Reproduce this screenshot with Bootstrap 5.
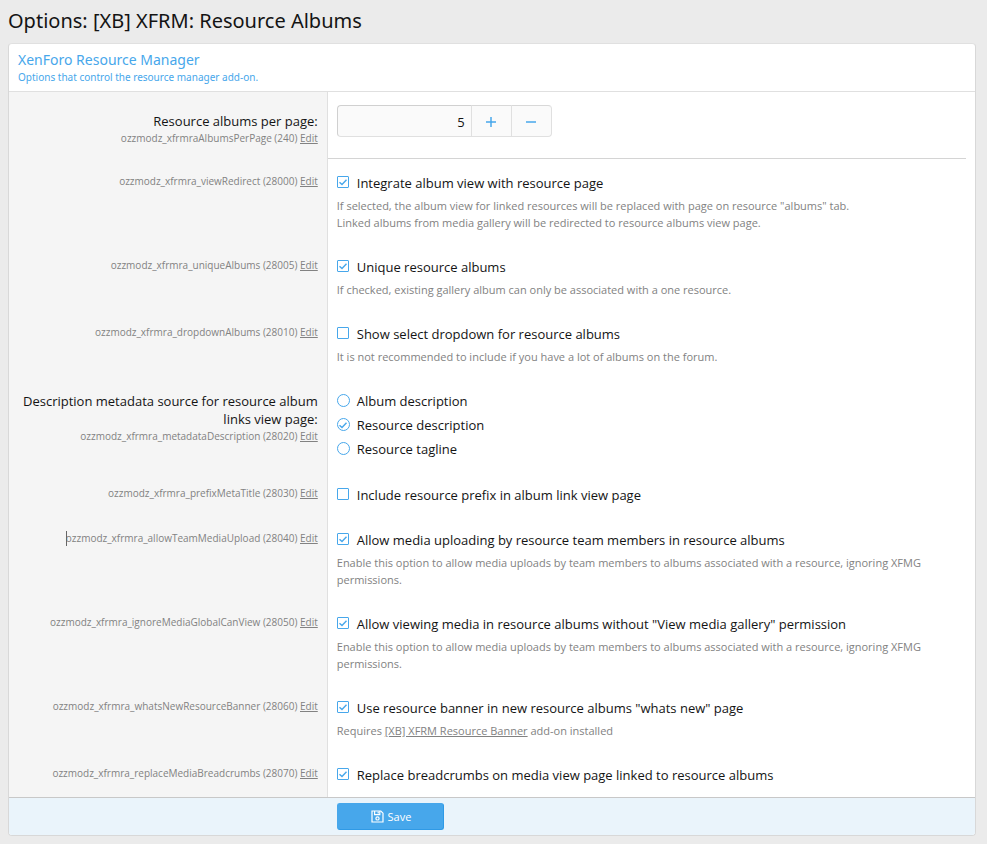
<!DOCTYPE html>
<html lang="en">
<head>
<meta charset="utf-8">
<meta name="viewport" content="width=device-width, initial-scale=1">
<title>Options: [XB] XFRM: Resource Albums</title>
<link href="https://cdn.jsdelivr.net/npm/bootstrap@5.3.0/dist/css/bootstrap.min.css" rel="stylesheet">
<style>
  body { background: #ebebeb; color: #141414; font-family: "Open Sans", sans-serif; font-size: 13px; line-height: 18px; }
  .page { padding: 8px 11px 8px 8px; }
  .page-title { font-family: "Noto Sans", sans-serif; font-size: 20px; line-height: 26px; margin-bottom: 9px; }
  .block { background: #fff; border: 1px solid #d8d8d8; border-top-color: #e0e0e0; border-radius: 4px; overflow: hidden; }
  .block-head { font-family: "Noto Sans", sans-serif; color: #47a7eb; padding: 6px 9px 6px; border-bottom: 1px solid #e0e0e0; }
  .block-head h2 { font-size: 14px; line-height: 20px; margin: 0; }
  .block-head p { font-size: 10px; line-height: 15px; margin: 0; }
  .term { width: 33%; background: #f5f5f5; border-right: 1px solid #e0e0e0; padding: 14px 9px 0; }
  .term label, .term .term-label { display: block; padding-top: 1px; }
  .term small { display: block; font-size: 10px; line-height: 16px; color: #828282; }
  .term small a, .hint a { color: #828282; }
  .value { padding: 15px 9px 12px; min-width: 0; }
  .first .term { padding-top: 19px; }
  .first .value { padding: 13px 9px 21px 9px; }
  .first-line { border-bottom: 1px solid #d4d4d4; margin-right: 9px; }
  .last-row .value { padding-bottom: 13px; }
  .hint { font-size: 11px; line-height: 17px; color: #828282; margin: 5px 0 0; }
  .choice { display: flex; gap: 8px; min-height: 18px; margin: 0; padding: 0; }
  .choice .form-check-input { width: 12px; height: 12px; margin: 2px 0 0; float: none; flex: none; border: 1px solid #47a7eb; border-radius: 1px; background-color: #fff; box-shadow: none; }
  .choice .form-check-input[type=radio] { width: 13px; height: 13px; margin-right: -1px; border-radius: 50%; }
  .choice .form-check-input:checked { background-color: #fff; background-size: 10px 10px; background-position: center; background-image: url("data:image/svg+xml,%3Csvg xmlns='http://www.w3.org/2000/svg' viewBox='0 0 10 10'%3E%3Cpath d='M1.5 5.2L4 7.5L8.5 2.8' fill='none' stroke='%2347a7eb' stroke-width='1.4'/%3E%3C/svg%3E"); }
  .radios { gap: 6px; padding-bottom: 1px; }
  .stepper { width: 215px; height: 32px; }
  .stepper .form-control { font: inherit; text-align: right; color: #141414; background: #fafafa; border-color: #d0d0d0 #e0e0e0 #e0e0e0 #d0d0d0; padding: 2px 6px 0; border-radius: 4px; appearance: textfield; -moz-appearance: textfield; }
  .stepper .form-control::-webkit-inner-spin-button { appearance: none; margin: 0; }
  .stepper .btn { width: 41px; padding: 0 0 2px; background: #fafafa; border-color: #d8d8d8 #e0e0e0 #e0e0e0; border-radius: 4px; line-height: 1; }
  .stepper svg { stroke: #47a7eb; stroke-width: 1.5; }
  .caret::before { content: ""; position: absolute; left: 0; top: 0; width: 1px; height: 15px; background: #666; }
  .block-foot { background: #eaf4fb; border-top: 1px solid #c8c8c8; padding: 5px 0 5px 34%; }
  .btn-save { width: 107px; height: 27px; padding: 0; background: #47a7eb; border: 1px solid #47a7eb; border-right-color: #2f9ae6; border-bottom-color: #2f9ae6; border-radius: 3px; color: #fff; font: 11px/18px "Open Sans", sans-serif; }
</style>
</head>
<body>
<main class="page">
  <h1 class="page-title fw-normal">Options: [XB] XFRM: Resource Albums</h1>
  <form class="block">
    <header class="block-head">
      <h2 class="fw-normal">XenForo Resource Manager</h2>
      <p>Options that control the resource manager add-on.</p>
    </header>

    <div class="d-flex first">
      <div class="term text-end flex-shrink-0">
        <label for="perPage">Resource albums per page:</label>
        <small>ozzmodz_xfrmraAlbumsPerPage (240) <a href="#">Edit</a></small>
      </div>
      <div class="flex-fill first-line"><div class="value">
        <div class="input-group stepper flex-nowrap">
          <input class="form-control" type="number" id="perPage" value="5">
          <button class="btn" type="button" aria-label="Increase"><svg width="12" height="12" viewBox="0 0 12 12"><path d="M1 6H11M6 1V11"/></svg></button>
          <button class="btn" type="button" aria-label="Decrease"><svg width="12" height="12" viewBox="0 0 12 12"><path d="M1 6H11"/></svg></button>
        </div>
      </div></div>
    </div>

    <div class="d-flex">
      <div class="term text-end flex-shrink-0"><small>ozzmodz_xfrmra_viewRedirect (28000) <a href="#">Edit</a></small></div>
      <div class="value flex-fill">
        <div class="choice"><input class="form-check-input" type="checkbox" id="redirect" checked><label for="redirect">Integrate album view with resource page</label></div>
        <p class="hint">If selected, the album view for linked resources will be replaced with page on resource "albums" tab.<br>Linked albums from media gallery will be redirected to resource albums view page.</p>
      </div>
    </div>

    <div class="d-flex">
      <div class="term text-end flex-shrink-0"><small>ozzmodz_xfrmra_uniqueAlbums (28005) <a href="#">Edit</a></small></div>
      <div class="value flex-fill">
        <div class="choice"><input class="form-check-input" type="checkbox" id="unique" checked><label for="unique">Unique resource albums</label></div>
        <p class="hint">If checked, existing gallery album can only be associated with a one resource.</p>
      </div>
    </div>

    <div class="d-flex">
      <div class="term text-end flex-shrink-0"><small>ozzmodz_xfrmra_dropdownAlbums (28010) <a href="#">Edit</a></small></div>
      <div class="value flex-fill">
        <div class="choice"><input class="form-check-input" type="checkbox" id="dropdown"><label for="dropdown">Show select dropdown for resource albums</label></div>
        <p class="hint">It is not recommended to include if you have a lot of albums on the forum.</p>
      </div>
    </div>

    <div class="d-flex" role="radiogroup" aria-labelledby="metaLabel">
      <div class="term text-end flex-shrink-0">
        <span class="term-label" id="metaLabel">Description metadata source for resource album links view page:</span>
        <small>ozzmodz_xfrmra_metadataDescription (28020) <a href="#">Edit</a></small>
      </div>
      <div class="value flex-fill"><div class="d-flex flex-column radios">
        <div class="choice"><input class="form-check-input" type="radio" name="meta" id="meta1"><label for="meta1">Album description</label></div>
        <div class="choice"><input class="form-check-input" type="radio" name="meta" id="meta2" checked><label for="meta2">Resource description</label></div>
        <div class="choice"><input class="form-check-input" type="radio" name="meta" id="meta3"><label for="meta3">Resource tagline</label></div>
      </div></div>
    </div>

    <div class="d-flex">
      <div class="term text-end flex-shrink-0"><small>ozzmodz_xfrmra_prefixMetaTitle (28030) <a href="#">Edit</a></small></div>
      <div class="value flex-fill">
        <div class="choice"><input class="form-check-input" type="checkbox" id="prefix"><label for="prefix">Include resource prefix in album link view page</label></div>
      </div>
    </div>

    <div class="d-flex">
      <div class="term text-end flex-shrink-0"><small><span class="caret position-relative">ozzmodz_xfrmra_allowTeamMediaUpload</span> (28040) <a href="#">Edit</a></small></div>
      <div class="value flex-fill">
        <div class="choice"><input class="form-check-input" type="checkbox" id="team" checked><label for="team">Allow media uploading by resource team members in resource albums</label></div>
        <p class="hint">Enable this option to allow media uploads by team members to albums associated with a resource, ignoring XFMG permissions.</p>
      </div>
    </div>

    <div class="d-flex">
      <div class="term text-end flex-shrink-0"><small>ozzmodz_xfrmra_ignoreMediaGlobalCanView (28050) <a href="#">Edit</a></small></div>
      <div class="value flex-fill">
        <div class="choice"><input class="form-check-input" type="checkbox" id="ignore" checked><label for="ignore">Allow viewing media in resource albums without "View media gallery" permission</label></div>
        <p class="hint">Enable this option to allow media uploads by team members to albums associated with a resource, ignoring XFMG permissions.</p>
      </div>
    </div>

    <div class="d-flex">
      <div class="term text-end flex-shrink-0"><small>ozzmodz_xfrmra_whatsNewResourceBanner (28060) <a href="#">Edit</a></small></div>
      <div class="value flex-fill">
        <div class="choice"><input class="form-check-input" type="checkbox" id="banner" checked><label for="banner">Use resource banner in new resource albums "whats new" page</label></div>
        <p class="hint">Requires <a href="#">[XB] XFRM Resource Banner</a> add-on installed</p>
      </div>
    </div>

    <div class="d-flex last-row">
      <div class="term text-end flex-shrink-0"><small>ozzmodz_xfrmra_replaceMediaBreadcrumbs (28070) <a href="#">Edit</a></small></div>
      <div class="value flex-fill">
        <div class="choice"><input class="form-check-input" type="checkbox" id="crumbs" checked><label for="crumbs">Replace breadcrumbs on media view page linked to resource albums</label></div>
      </div>
    </div>

    <footer class="block-foot">
      <button class="btn btn-save d-flex align-items-center justify-content-center gap-1" type="submit">
        <svg width="13" height="13" viewBox="0 0 13 13" fill="none" stroke="#fff" stroke-width="1.2"><path d="M1 1H9.8L12 3.2V12H1Z"/><path d="M3.6 1V4.6H8.8V1M7.2 1.5V3.4"/><circle cx="6.5" cy="8.4" r="1.6"/></svg>
        <span>Save</span>
      </button>
    </footer>
  </form>
</main>
<script src="https://cdn.jsdelivr.net/npm/bootstrap@5.3.0/dist/js/bootstrap.bundle.min.js"></script>
</body>
</html>
